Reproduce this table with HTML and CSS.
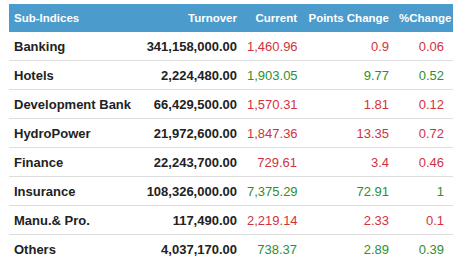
FILE: index.html
```html
<!DOCTYPE html>
<html>
<head>
<meta charset="utf-8">
<link rel="stylesheet" href="styles.css">
</head>
<body>
<table class="idx">
  <colgroup>
    <col class="c-name"><col class="c-turn"><col class="c-cur"><col class="c-pts"><col class="c-pct">
  </colgroup>
  <thead>
    <tr><th class="l">Sub-Indices</th><th>Turnover</th><th>Current</th><th>Points Change</th><th class="last">%Change</th></tr>
  </thead>
  <tbody>
    <tr class="dn"><td class="name">Banking</td><td class="turn">341,158,000.00</td><td>1,460.96</td><td>0.9</td><td class="last">0.06</td></tr>
    <tr class="up"><td class="name">Hotels</td><td class="turn">2,224,480.00</td><td>1,903.05</td><td>9.77</td><td class="last">0.52</td></tr>
    <tr class="dn"><td class="name">Development Bank</td><td class="turn">66,429,500.00</td><td>1,570.31</td><td>1.81</td><td class="last">0.12</td></tr>
    <tr class="dn"><td class="name">HydroPower</td><td class="turn">21,972,600.00</td><td>1,847.36</td><td>13.35</td><td class="last">0.72</td></tr>
    <tr class="dn"><td class="name">Finance</td><td class="turn">22,243,700.00</td><td>729.61</td><td>3.4</td><td class="last">0.46</td></tr>
    <tr class="up"><td class="name">Insurance</td><td class="turn">108,326,000.00</td><td>7,375.29</td><td>72.91</td><td class="last">1</td></tr>
    <tr class="dn"><td class="name">Manu.&amp; Pro.</td><td class="turn">117,490.00</td><td>2,219.14</td><td>2.33</td><td class="last">0.1</td></tr>
    <tr class="up"><td class="name">Others</td><td class="turn">4,037,170.00</td><td>738.37</td><td>2.89</td><td class="last">0.39</td></tr>
  </tbody>
</table>
</body>
</html>
```
FILE: styles.css
```css
html, body { margin: 0; padding: 0; background: #fff; }
body { font-family: "Liberation Sans", Arial, sans-serif; }
.idx {
  margin: 4px 0 0 9px;
  width: 444px;
  table-layout: fixed;
  border-collapse: separate;
  border-spacing: 0;
}
.c-name { width: 121px; }
.c-turn { width: 112px; }
.c-cur { width: 60px; }
.c-pts { width: 92px; }
.c-pct { width: 59px; }
.idx th {
  background: #4b9bcd;
  color: #fff;
  font-size: 11.5px;
  font-weight: bold;
  height: 28px;
  padding: 0 5px;
  text-align: right;
  white-space: nowrap;
  overflow: visible;
}
.idx th.l { text-align: left; }
.idx th.last { padding-right: 2px; }
.idx td {
  height: 28px;
  padding: 0 5px;
  font-size: 13px;
  text-align: right;
  border-bottom: 1px solid #dedede;
  white-space: nowrap;
}
.idx td.last { padding-right: 9px; }
.idx td.name { text-align: left; font-weight: bold; color: #222; }
.idx td.turn { font-weight: bold; color: #222; }
.dn td { color: #d2323e; }
.up td { color: #2f8f2f; }
```
